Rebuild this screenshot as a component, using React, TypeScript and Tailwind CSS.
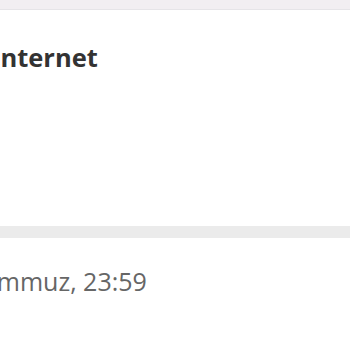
export default function App() {
  return (
    <div className="w-[350px] h-[350px] overflow-hidden bg-white flex flex-col" style={{ fontFamily: '"Open Sans", sans-serif' }}>
      <div className="h-[10px] bg-[#f2eef2] border-b border-[#e6e4e8] shrink-0" />
      <div className="h-[216px] shrink-0 pt-[31px]">
        <div className="ml-[-8px] text-[25.5px] leading-[32px] font-bold text-[#333333] whitespace-nowrap">Internet</div>
      </div>
      <div className="h-[12px] bg-[#ebebeb] shrink-0" />
      <div className="pt-[27px]">
        <div className="ml-[-31px] text-[25px] leading-[32px] text-[#666666] whitespace-nowrap">Temmuz, 23:59</div>
      </div>
    </div>
  );
}
